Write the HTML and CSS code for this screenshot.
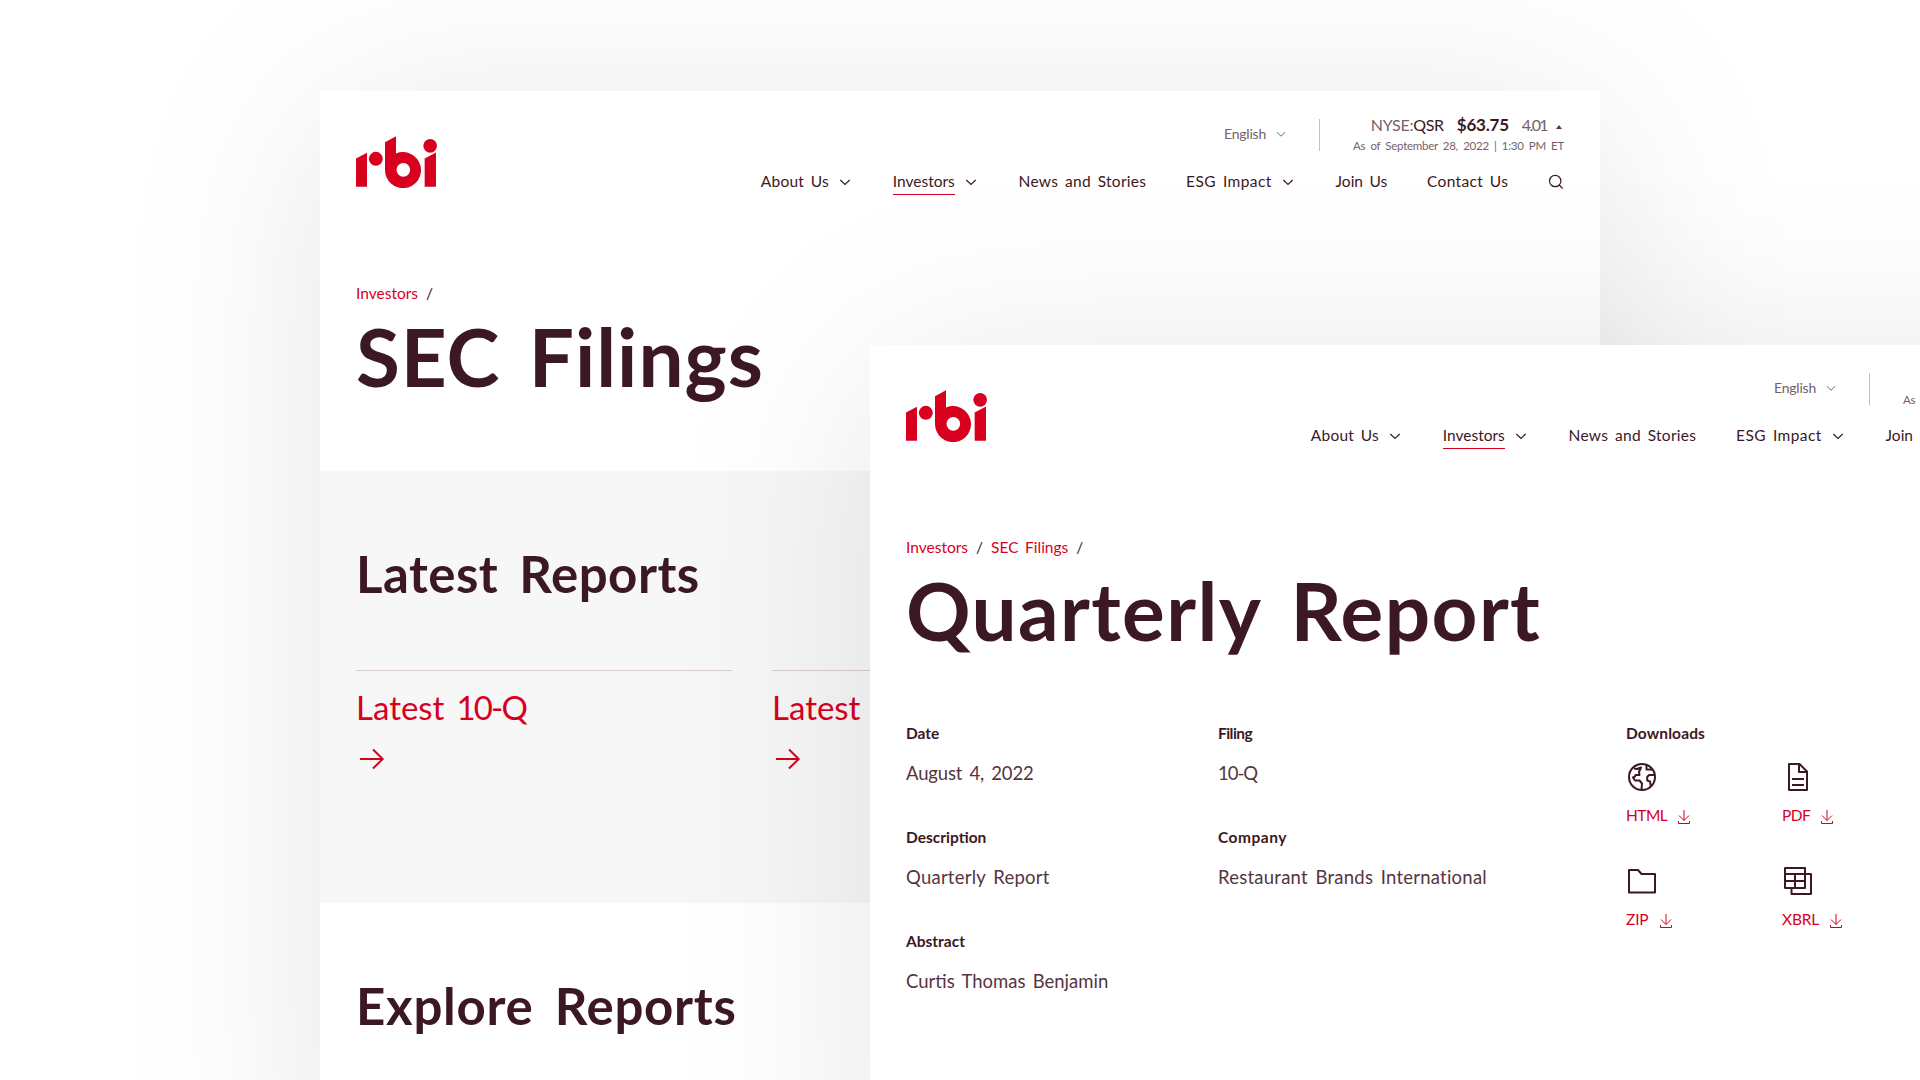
FILE: index.html
```html
<!DOCTYPE html>
<html lang="en">
<head>
<meta charset="utf-8">
<title>RBI – SEC Filings</title>
<link rel="stylesheet" href="styles.css">
</head>
<body>
<svg class="defs" width="0" height="0" aria-hidden="true">
  <symbol id="logo" viewBox="108 139 243 155">
    <path d="M108 206l33-17v102h-33z"/><circle cx="167.500" cy="207" r="21"/>
    <path fill-rule="evenodd" d="M195 157l33-18v52a54 54 0 1 1-33 49zM250 219.500a20.500 20.500 0 1 0 0 41a20.500 20.500 0 1 0 0-41z"/>
    <circle cx="330.500" cy="168" r="20.500"/><path d="M314 206l34-18v103h-34z"/>
  </symbol>
  <symbol id="chevron" viewBox="0 0 16 16"><path d="M3.300 6l4.700 4.500L12.700 6"/></symbol>
  <symbol id="search" viewBox="0 0 16 16"><circle cx="7.200" cy="7" r="5.700"/><path d="M11.300 11l3.400 3.700"/></symbol>
  <symbol id="arrow" viewBox="0 0 32 32"><path d="M4 16h23M17 6.500l9.700 9.500L17 25.500"/></symbol>
  <symbol id="download" viewBox="0 0 16 16"><path d="M8 1v10.500M3 6.500l5 5 5-5M2.500 12v2.500h11V12"/></symbol>
  <symbol id="globe" viewBox="0 0 32 32"><circle cx="16" cy="16" r="13"/><path d="M8 7.500l3 .500 4-1.500-2 4.500.500 3H9.500L9 15.500l-2 1 2 3h4.500l2.500 3-.500 6M20.500 4v4.500h4l1.500.500M28.500 14H23l-1.800 2v3.500l2.800 1 .800 4.500"/></symbol>
  <symbol id="file" viewBox="0 0 32 32"><path d="M7 3h10.500L25 10.500V29H7zM17 3v8h8M10 18h12M10 24h12"/></symbol>
  <symbol id="folder" viewBox="0 0 32 32"><path d="M3 5h9l3.500 4H29v18.500H3z"/></symbol>
  <symbol id="sheets" viewBox="0 0 32 32"><path d="M3 3h20v20H3zM3 9h20M3 16h20M13 9v14M23 9h6v20H9.500v-6"/></symbol>
</svg>

<div class="window window-back">
  <header class="header">
    <svg class="logo"><use href="#logo"/></svg>
    <div class="header-main">
      <div class="utility">
        <div class="language"><span>English</span><svg class="chevron"><use href="#chevron"/></svg></div>
        <div class="stock">
          <div class="quote"><span class="ticker">NYSE:<b>QSR</b></span><span class="price">$63.75</span><span class="change">4.01</span><i class="up"></i></div>
          <div class="asof">As of September 28, 2022 | 1:30 PM ET</div>
        </div>
      </div>
      <nav class="nav">
        <div class="item"><a>About Us</a><svg class="chevron"><use href="#chevron"/></svg></div>
        <div class="item"><a class="active">Investors</a><svg class="chevron"><use href="#chevron"/></svg></div>
        <div class="item"><a>News and Stories</a></div>
        <div class="item"><a>ESG Impact</a><svg class="chevron"><use href="#chevron"/></svg></div>
        <div class="item"><a>Join Us</a></div>
        <div class="item"><a>Contact Us</a></div>
        <svg class="search"><use href="#search"/></svg>
      </nav>
    </div>
  </header>
  <section class="hero">
    <div class="crumbs"><a>Investors</a><span>/</span></div>
    <h1>SEC Filings</h1>
  </section>
  <section class="latest">
    <h2>Latest Reports</h2>
    <div class="cards">
      <a class="card"><span>Latest <span class="form-type">10-Q</span></span><svg class="arrow"><use href="#arrow"/></svg></a>
      <a class="card"><span>Latest</span><svg class="arrow"><use href="#arrow"/></svg></a>
    </div>
  </section>
  <section class="explore"><h2>Explore Reports</h2></section>
</div>

<div class="window window-front">
  <header class="header">
    <svg class="logo"><use href="#logo"/></svg>
    <div class="header-main">
      <div class="utility">
        <div class="language"><span>English</span><svg class="chevron"><use href="#chevron"/></svg></div>
        <div class="stock">
          <div class="quote"><span class="ticker">NYSE:<b>QSR</b></span><span class="price">$63.75</span><span class="change">4.01</span><i class="up"></i></div>
          <div class="asof">As of September 28, 2022 | 1:30 PM ET</div>
        </div>
      </div>
      <nav class="nav">
        <div class="item"><a>About Us</a><svg class="chevron"><use href="#chevron"/></svg></div>
        <div class="item"><a class="active">Investors</a><svg class="chevron"><use href="#chevron"/></svg></div>
        <div class="item"><a>News and Stories</a></div>
        <div class="item"><a>ESG Impact</a><svg class="chevron"><use href="#chevron"/></svg></div>
        <div class="item"><a>Join Us</a></div>
        <div class="item"><a>Contact Us</a></div>
        <svg class="search"><use href="#search"/></svg>
      </nav>
    </div>
  </header>
  <section class="hero">
    <div class="crumbs"><a>Investors</a><span>/</span><a>SEC Filings</a><span>/</span></div>
    <h1>Quarterly Report</h1>
  </section>
  <section class="filing">
    <dl class="facts">
      <div><dt>Date</dt><dd class="date">August 4, 2022</dd></div>
      <div><dt class="tight">Filing</dt><dd class="form-type">10-Q</dd></div>
      <div><dt>Description</dt><dd class="wide">Quarterly Report</dd></div>
      <div><dt class="wide">Company</dt><dd class="wide">Restaurant Brands International</dd></div>
      <div><dt>Abstract</dt><dd>Curtis Thomas Benjamin</dd></div>
    </dl>
    <div class="downloads">
      <h3>Downloads</h3>
      <div class="files">
        <a class="file"><svg class="type"><use href="#globe"/></svg><span class="get tight">HTML<svg class="dl"><use href="#download"/></svg></span></a>
        <a class="file"><svg class="type"><use href="#file"/></svg><span class="get tight">PDF<svg class="dl"><use href="#download"/></svg></span></a>
        <a class="file"><svg class="type"><use href="#folder"/></svg><span class="get">ZIP<svg class="dl"><use href="#download"/></svg></span></a>
        <a class="file"><svg class="type"><use href="#sheets"/></svg><span class="get">XBRL<svg class="dl"><use href="#download"/></svg></span></a>
      </div>
    </div>
  </section>
</div>
</body>
</html>
```
FILE: styles.css
```css
* { box-sizing: border-box; }
body {
  margin: 0;
  width: 1920px;
  height: 1080px;
  overflow: hidden;
  position: relative;
  background: #fff;
  color: #3c1823;
  font-family: Lato, "Open Sans", sans-serif;
  word-spacing: 0.16em;
}
h1, h2, h3, dl, dd { margin: 0; }
svg { display: block; flex: none; fill: none; stroke: currentColor; }
.defs { position: absolute; }

.window {
  position: absolute;
  width: 1280px;
  overflow: clip;
  background: #fff;
  box-shadow: 0 24px 200px rgba(0, 0, 0, 0.1);
}
.window-back { left: 320px; top: 91px; height: 1100px; }
.window-front { left: 870px; top: 345px; height: 900px; }

.header { display: flex; justify-content: space-between; padding: 23px 36px 0; }
.logo { width: 81px; height: 52px; margin-top: 22px; fill: #d7001e; stroke: none; }
.header-main { display: flex; flex-direction: column; align-items: flex-end; gap: 17px; }
.utility { display: flex; height: 40px; align-items: center; }
.language { display: flex; align-items: center; gap: 8px; height: 32px; margin-top: 2px; padding: 0 31px 2px 0; border-right: 1px solid #cdbcc3; font-size: 14px; line-height: 18px; letter-spacing: -0.0156em; color: #765f68; }
.language .chevron { width: 14px; height: 14px; stroke-width: 1.1; }
.stock { display: flex; flex-direction: column; align-items: flex-end; padding-left: 33px; }
.quote { display: flex; align-items: center; height: 22px; font-size: 16px; line-height: 22px; }
.asof { font-size: 11.5px; line-height: 20px; margin-bottom: -2px; letter-spacing: -0.0239em; color: #765f68; }
.ticker { letter-spacing: -0.0179em; color: #765f68; }
.ticker b { font-weight: 400; color: #3c1823; }
.price { font-size: 17px; font-weight: 700; letter-spacing: -0.0132em; margin-left: 13px; }
.change { letter-spacing: -0.1em; color: #765f68; margin-left: 13px; }
.up { margin: 3px 2px 0 9px; border: 3px solid transparent; border-top: 0; border-bottom: 4px solid #553540; }
.chevron { width: 16px; height: 16px; stroke-width: 1.2; }
.nav { display: flex; gap: 39.8px; height: 24px; font-size: 15.5px; line-height: 20px; }
.item { display: flex; gap: 8px; }
.item:nth-child(1) { letter-spacing: 0.014em; }
.item:nth-child(3) { letter-spacing: 0.018em; }
.item:nth-child(4) { letter-spacing: 0.027em; }
.item:nth-child(6) { letter-spacing: 0.02em; }
.item .chevron { margin-top: 3px; }
.active { height: 24px; border-bottom: 1px solid #d7001e; }
.search { width: 16px; height: 16px; margin-top: 3px; stroke-width: 1.2; }

.hero { padding: 88px 36px 0; }
.window-back .hero { height: 276px; }
.crumbs { display: flex; gap: 8px; font-size: 15.5px; line-height: 20px; }
.crumbs a { color: #d7001e; }
h1 { margin-top: 9px; font-size: 80px; line-height: 88px; font-weight: 700; letter-spacing: 0.012em; word-spacing: 0.1em; }
.window-front h1 { letter-spacing: 0.0175em; word-spacing: 0.115em; }
h2 { font-size: 51px; line-height: 60px; font-weight: 700; letter-spacing: 0.0095em; word-spacing: 0.16em; }
.latest { height: 432px; padding: 73px 36px 0; background: #f7f7f7; }
.cards { display: grid; grid-template-columns: repeat(3, 376px); gap: 40px; margin-top: 66px; }
.card { border-top: 1px solid #d8c9cf; padding-top: 16px; color: #d7001e; font-size: 33px; line-height: 40px; word-spacing: 0.11em; }
.arrow { width: 32px; height: 32px; margin-top: 16px; stroke-width: 2; }
.explore { padding: 73px 36px 0; }
.explore h2 { letter-spacing: 0.014em; }

.filing { display: flex; padding: 69px 36px 0; }
.facts { display: grid; grid-template-columns: 312px 408px; grid-auto-rows: 104px; }
dt, h3 { font-size: 15.5px; line-height: 20px; font-weight: 700; }
h3 { letter-spacing: 0.008em; }
dt.wide { letter-spacing: 0.0336em; }
dd { margin-top: 18px; font-size: 18.5px; line-height: 24px; color: #553540; }
dd.wide { letter-spacing: 0.013em; }
dd.date { letter-spacing: -0.008em; }
.form-type { letter-spacing: -0.056em; }
.files { display: grid; grid-template-columns: 156px 156px; gap: 40px 0; margin-top: 18px; }
.type { width: 32px; height: 32px; stroke-width: 2; stroke-linejoin: round; }
.get { display: flex; gap: 9px; margin-top: 12px; font-size: 15.5px; line-height: 20px; letter-spacing: -0.01em; color: #d7001e; }
.tight { letter-spacing: -0.035em; }
.dl { width: 16px; height: 16px; margin-top: 4px; }
```
